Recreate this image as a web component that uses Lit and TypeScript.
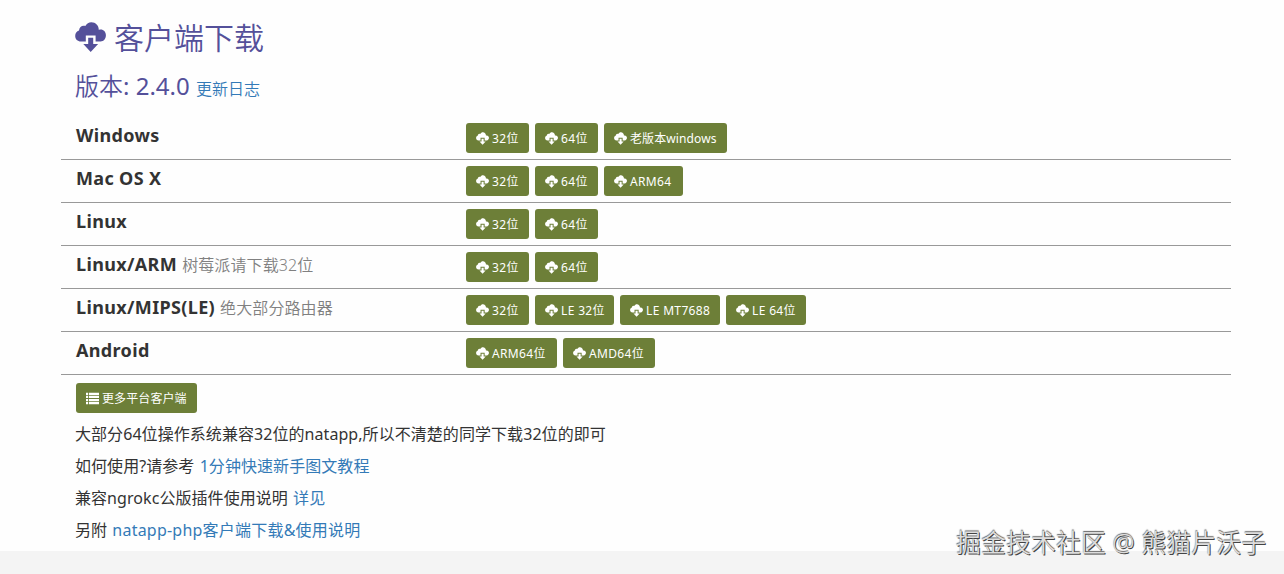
import { LitElement, html, css, svg } from "lit";
import { customElement, property } from "lit/decorators.js";
import { styleMap } from "lit/directives/style-map.js";

const icons = {
    cloud: svg`
        <path d="M5.900 19.500C2.600 19.500.200 17.200.200 14c0-2.600 1.500-4.700 3.800-5.400C4.300 5.600 6.300 3.700 8.700 3.700c.6 0 1.100.1 1.600.3C11.600 1.600 13.800.2 16.400.2c4.200 0 7.400 3.300 7.400 7.500v.3c.6-.3 1.200-.4 1.900-.4 2.900 0 5.200 2.400 5.200 5.700 0 3.500-2.300 6.200-5.300 6.200H20.600V13.500H10.800v6z"/>
        <path d="M13.200 15.700h5v6.300h4.900L15.700 30 8.300 22h4.900z"/>
    `,
    list: svg`
        <path d="M0 1h5v5.500H0zM7 1h24v5.500H7zM0 8.500h5V14H0zM7 8.500h24V14H7zM0 16h5v5.500H0zM7 16h24v5.500H7zM0 23.500h5V29H0zM7 23.500h24V29H7z"/>
    `
};

const platforms = [
    { name: "Windows", note: "", files: [["32位", 63], ["64位", 63], ["老版本windows", 123]] },
    { name: "Mac OS X", note: "", files: [["32位", 63], ["64位", 63], ["ARM64", 79]] },
    { name: "Linux", note: "", files: [["32位", 63], ["64位", 63]] },
    { name: "Linux/ARM", note: "树莓派请下载32位", files: [["32位", 63], ["64位", 63]] },
    { name: "Linux/MIPS(LE)", note: "绝大部分路由器", files: [["32位", 63], ["LE 32位", 79], ["LE MT7688", 100], ["LE 64位", 80]] },
    { name: "Android", note: "", files: [["ARM64位", 91], ["AMD64位", 92]] }
];

@customElement("download-button")
export class DownloadButton extends LitElement {
    @property() icon = "cloud";
    @property() label = "";
    @property({ type: Number }) width = 63;

    static styles = css`
        :host {
            display: block;
        }

        button {
            box-sizing: border-box;
            display: flex;
            align-items: center;
            gap: 3px;
            height: 30px;
            padding: 1px 10px 0;
            border: none;
            border-radius: 3px;
            background: #6d7f38;
            color: white;
            font: 12px/18px "Noto Sans", "Noto Sans CJK SC", sans-serif;
            letter-spacing: 0.35px;
            white-space: nowrap;
            cursor: pointer;
        }

        svg {
            flex: none;
            width: 13px;
            height: 13px;
            fill: currentColor;
        }

        .long {
            letter-spacing: 0.1px;
        }
    `;

    render() {
        return html`
            <button type="button" style=${styleMap({ width: `${this.width}px` })}>
                <svg viewBox="0 0 31 30">${icons[this.icon]}</svg>
                <span class=${this.width > 110 ? "long" : ""}>${this.label}</span>
            </button>
        `;
    }
}

@customElement("app-root")
export class AppRoot extends LitElement {
    static styles = css`
        :host {
            display: block;
            position: relative;
            height: 574px;
            overflow: hidden;
            background: #f4f4f4;
            color: #333;
            font: 16px/24px "Noto Sans", "Noto Sans CJK SC", sans-serif;
        }

        * {
            box-sizing: border-box;
        }

        main {
            height: 551px;
            padding: 17px 53px 0 61px;
            background: #fefefe;
        }

        h1, h2, h3, p {
            margin: 0;
            padding: 0 14px;
            white-space: nowrap;
        }

        h1, h2 {
            color: #54509a;
            font-weight: 350;
        }

        h1 {
            display: flex;
            gap: 8px;
            height: 42px;
            font-size: 30px;
            line-height: 42px;
        }

        h1 svg {
            width: 31px;
            height: 30px;
            margin-top: 5px;
            fill: currentColor;
        }

        h2 {
            height: 58px;
            padding-top: 9px;
            font-size: 24px;
            line-height: 36px;
        }

        h2 span {
            font-weight: 400;
        }

        h2 a {
            font-size: 16px;
        }

        a {
            color: #337ab7;
            text-decoration: none;
        }

        .platform {
            display: grid;
            grid-template-columns: 405px 1fr;
            height: 43px;
            padding-top: 6px;
            border-bottom: 1px solid #999;
        }

        h3 {
            padding: 0 15px;
            font-size: 18px;
            line-height: 25px;
            letter-spacing: 0.35px;
        }

        small {
            color: #808080;
            font-size: 16px;
            font-weight: 350;
            letter-spacing: 0.1px;
        }

        .files {
            display: flex;
            gap: 6px;
        }

        .more {
            display: flex;
            padding: 8px 15px 9px;
        }

        p {
            height: 32px;
            letter-spacing: 0.06px;
            word-spacing: 1px;
        }

        .php {
            letter-spacing: 0.22px;
        }

        .watermark {
            position: absolute;
            right: 18px;
            bottom: 13px;
            color: #ddd;
            font-size: 25px;
            font-weight: 350;
            line-height: 38px;
            text-shadow: 1px 1px 0 #444, 0 -1px 1px #666;
            white-space: nowrap;
        }
    `;

    render() {
        return html`
            <main>
                <h1><svg viewBox="0 0 31 30">${icons.cloud}</svg><span>客户端下载</span></h1>
                <h2>版本<span>: 2.4.0</span> <a href="#">更新日志</a></h2>
                ${platforms.map(platform => html`
                    <div class="platform">
                        <h3>${platform.name} <small>${platform.note}</small></h3>
                        <div class="files">
                            ${platform.files.map(([label, width]) => html`
                                <download-button label=${label} width=${width}></download-button>
                            `)}
                        </div>
                    </div>
                `)}
                <div class="more">
                    <download-button icon="list" label="更多平台客户端" width="121"></download-button>
                </div>
                <p>大部分64位操作系统兼容32位的natapp,所以不清楚的同学下载32位的即可</p>
                <p>如何使用?请参考 <a href="#">1分钟快速新手图文教程</a></p>
                <p>兼容ngrokc公版插件使用说明 <a href="#">详见</a></p>
                <p>另附 <a class="php" href="#">natapp-php客户端下载&amp;使用说明</a></p>
            </main>
            <div class="watermark">掘金技术社区 @ 熊猫片沃子</div>
        `;
    }
}
